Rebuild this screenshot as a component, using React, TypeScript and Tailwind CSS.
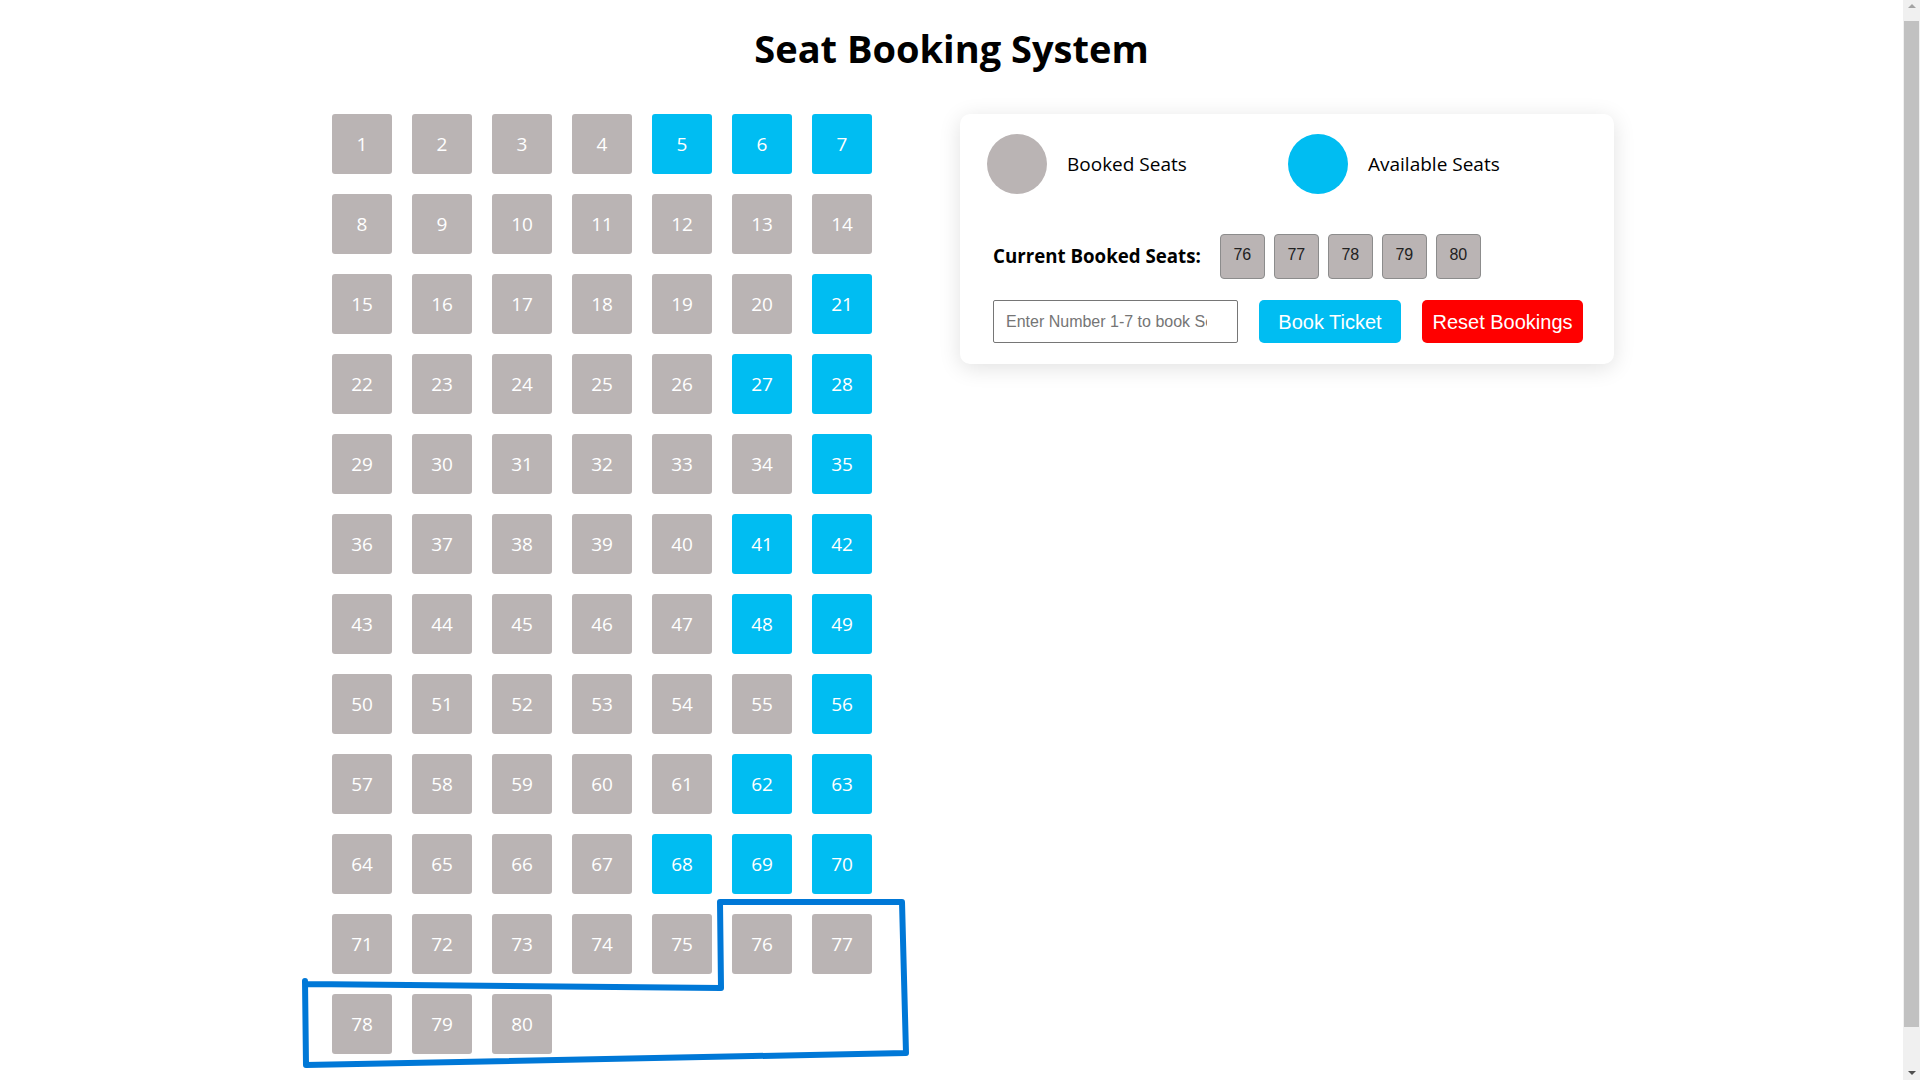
import React from "react";

const available = [5, 6, 7, 21, 27, 28, 35, 41, 42, 48, 49, 56, 62, 63, 68, 69, 70];
const current = [76, 77, 78, 79, 80];

const Seat = ({ n }: { n: number }) => {
  const free = available.includes(n);
  return (
    <div
      className={`flex h-[60px] w-[60px] items-center justify-center rounded-[3px] text-[19px] text-white ${
        free ? "bg-[#00bdf2]" : "bg-[#bab4b4]"
      }`}
    >
      {n}
    </div>
  );
};

// fake browser scrollbar, the page in the shot is a bit taller than the window
const ScrollBar = () => (
  <div className="pointer-events-none fixed top-0 right-0 flex h-[1080px] w-[17px] flex-col items-center bg-[#f0f0f0]">
    <div className="mt-[4px] h-0 w-0 border-x-[4px] border-b-[4px] border-x-transparent border-b-[#a3a3a3]" />
    <div className="mt-[13px] h-[1006px] w-[15px] bg-[#c1c1c1]" />
    <div className="mt-auto mb-[5px] h-0 w-0 border-x-[4px] border-t-[4px] border-x-transparent border-t-[#505050]" />
  </div>
);

const App = () => {
  return (
    <div className="relative min-h-[1123px] bg-white font-['Open_Sans',sans-serif] text-black">
      <h1 className="pt-[22px] pr-[17px] text-center text-[38px] leading-[52px] font-bold">
        Seat Booking System
      </h1>

      <div className="mt-[40px] flex items-start gap-[88px] pb-[70px] pl-[332px]">
        <div className="grid grid-cols-[repeat(7,60px)] gap-[20px]">
          {Array.from({ length: 80 }, (_, i) => (
            <Seat key={i} n={i + 1} />
          ))}
        </div>

        <div className="w-[654px] rounded-[10px] bg-white px-[27px] pt-[20px] pb-[21px] shadow-[0_4px_22px_rgba(0,0,0,0.12)]">
          <div className="flex items-center">
            <div className="flex w-[301px] items-center gap-[20px]">
              <span className="h-[60px] w-[60px] rounded-full bg-[#bab4b4]" />
              <span className="text-[19px]">Booked Seats</span>
            </div>
            <div className="flex items-center gap-[20px]">
              <span className="h-[60px] w-[60px] rounded-full bg-[#00bdf2]" />
              <span className="text-[19px]">Available Seats</span>
            </div>
          </div>

          <div className="mt-[40px] flex items-center pl-[6px]">
            <span className="mr-[19px] text-[18.7px] font-bold">Current Booked Seats:</span>
            <div className="flex gap-[9px]">
              {current.map((n) => (
                <span
                  key={n}
                  className="flex h-[45px] w-[45px] items-center justify-center rounded-[4px] border border-[#8c8c8c] bg-[#bab4b4] pb-[3px] font-['Liberation_Sans',sans-serif] text-[16px] text-[#222]"
                >
                  {n}
                </span>
              ))}
            </div>
          </div>

          <div className="mt-[21px] flex items-center gap-[21px] pl-[6px] font-['Liberation_Sans',sans-serif]">
            <input
              type="text"
              placeholder="Enter Number 1-7 to book Seats"
              className="h-[43px] w-[245px] rounded-[2px] border border-[#767676] px-[12px] pr-[30px] text-[16px] placeholder:text-[#757575]"
            />
            <button className="h-[43px] w-[142px] rounded-[5px] bg-[#00bdf2] text-[20px] text-white">
              Book Ticket
            </button>
            <button className="h-[43px] w-[161px] rounded-[5px] bg-[#ff0000] text-[20px] text-white">
              Reset Bookings
            </button>
          </div>
        </div>
      </div>

      <svg
        className="pointer-events-none absolute top-0 left-0"
        width="1000"
        height="1123"
        viewBox="0 0 1000 1123"
        fill="none"
      >
        <path
          d="M305 981 L306 1065 L906 1053 L902 902 L720 902 L721 988 L306 984"
          stroke="#0078d7"
          strokeWidth="6"
          strokeLinecap="round"
          strokeLinejoin="round"
        />
      </svg>

      <ScrollBar />
    </div>
  );
};

export default App;
